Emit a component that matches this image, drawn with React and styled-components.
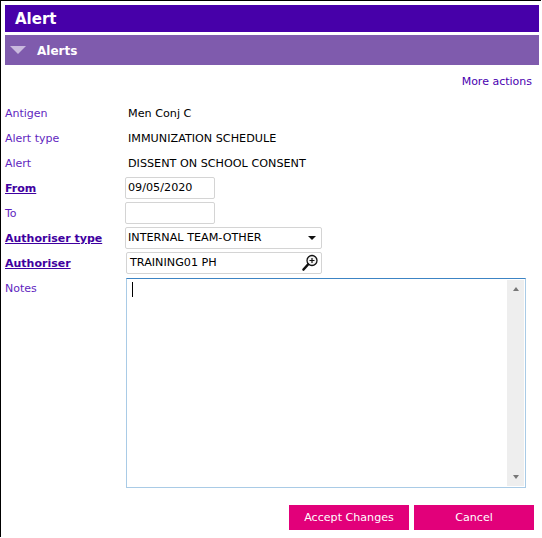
import React from "react";
import styled, { createGlobalStyle } from "styled-components";

const Global = createGlobalStyle`
  html, body { margin: 0; padding: 0; background: #fff; }
  body {
    font-family: "DejaVu Sans", Verdana, sans-serif;
    font-size: 11px;
    color: #000;
  }
`;

const Page = styled.div`
  width: 541px;
  height: 537px;
  overflow: hidden;
  border-top: 1px solid #000;
  border-left: 1px solid #000;
  padding: 4px 2px 0 4px;
  box-sizing: border-box;
  background: #fff;
`;

const TitleBar = styled.div`
  height: 27px;
  background: #4700a9;
  color: #fff;
  font-size: 15px;
  font-weight: 700;
  line-height: 29px;
  padding-left: 10px;
`;

const SectionBar = styled.div`
  margin-top: 3px;
  height: 30px;
  box-sizing: border-box;
  background: #7f5bad;
  color: #fff;
  font-size: 12px;
  font-weight: 700;
  display: flex;
  align-items: center;
  gap: 11px;
  padding: 1px 0 0 5px;
`;

const Arrow = styled.span`
  width: 0;
  height: 0;
  margin-top: -1px;
  border-left: 8px solid transparent;
  border-right: 8px solid transparent;
  border-top: 8px solid #c9b9de;
`;

const Actions = styled.div`
  height: 31px;
  padding-top: 1px;
  box-sizing: border-box;
  display: flex;
  align-items: center;
  justify-content: flex-end;
  padding-right: 7px;
`;

const ActionLink = styled.a`
  color: #4a00b0;
  font-size: 11px;
`;

const Form = styled.div`
  margin-top: 5px;
  display: flex;
  flex-direction: column;
`;

const Row = styled.div`
  min-height: 25px;
  display: grid;
  grid-template-columns: 120px 1fr;
  align-items: ${(p) => (p.$top ? "start" : "center")};
`;

const Label = styled.label`
  color: ${(p) => (p.$required ? "#3f00a0" : "#5f1fc0")};
  font-weight: ${(p) => (p.$required ? 700 : 400)};
  text-decoration: ${(p) => (p.$required ? "underline" : "none")};
  ${(p) => p.$top && "margin-top: 6px;"}
`;

const Value = styled.span`
  padding-left: 3px;
  font-size: 11.2px;
`;

const Field = styled.div`
  width: ${(p) => p.$width}px;
  height: 22px;
  box-sizing: border-box;
  border: 1px solid #d4d4d4;
  border-radius: 2px;
  background: #fff;
  display: flex;
  align-items: center;
  justify-content: space-between;
  padding: 0 3px 0 ${(p) => p.$textInset || 2}px;
  margin: 0 0 2px ${(p) => p.$inset || 0}px;
  font-size: 11.2px;
`;

const Caret = styled.span`
  width: 0;
  height: 0;
  margin-right: 2px;
  border-left: 4px solid transparent;
  border-right: 4px solid transparent;
  border-top: 4px solid #111;
`;

const Notes = styled.div`
  width: 400px;
  height: 210px;
  margin: 2px 0 0 1px;
  box-sizing: border-box;
  border: 1px solid #a9cbe6;
  border-top-color: #3c84c4;
  background: #fff;
  display: flex;
  justify-content: space-between;
  padding: 1px 1px 1px 5px;
`;

const TextCursor = styled.span`
  width: 1px;
  height: 15px;
  margin-top: 2px;
  background: #000;
`;

const Scrollbar = styled.div`
  width: 17px;
  background: #eeeeee;
  display: flex;
  flex-direction: column;
  justify-content: space-between;
  align-items: center;
  padding: 7px 0;
  box-sizing: border-box;
`;

const ScrollArrow = styled.span`
  width: 0;
  height: 0;
  border-left: 3px solid transparent;
  border-right: 3px solid transparent;
  ${(p) => (p.$up ? "border-bottom: 4px solid #777;" : "border-top: 4px solid #777;")}
`;

const Buttons = styled.div`
  margin-top: 17px;
  display: flex;
  justify-content: flex-end;
  gap: 5px;
  padding-right: 5px;
`;

const Button = styled.button`
  width: 120px;
  height: 25px;
  border: 0;
  background: #e2007a;
  color: #fff;
  font-family: inherit;
  font-size: 11.1px;
  padding: 0;
`;

export default function App() {
  return (
    <Page>
      <Global />
      <TitleBar>Alert</TitleBar>
      <SectionBar>
        <Arrow />
        Alerts
      </SectionBar>
      <Actions>
        <ActionLink>More actions</ActionLink>
      </Actions>
      <Form>
        <Row>
          <Label>Antigen</Label>
          <Value>Men Conj C</Value>
        </Row>
        <Row>
          <Label>Alert type</Label>
          <Value>IMMUNIZATION SCHEDULE</Value>
        </Row>
        <Row>
          <Label>Alert</Label>
          <Value>DISSENT ON SCHOOL CONSENT</Value>
        </Row>
        <Row>
          <Label $required>From</Label>
          <Field $width={90}>09/05/2020</Field>
        </Row>
        <Row>
          <Label>To</Label>
          <Field $width={90} />
        </Row>
        <Row>
          <Label $required>Authoriser type</Label>
          <Field $width={197}>
            INTERNAL TEAM-OTHER
            <Caret />
          </Field>
        </Row>
        <Row>
          <Label $required>Authoriser</Label>
          <Field $width={196} $inset={1} $textInset={3}>
            TRAINING01 PH
            <svg width="17" height="18" viewBox="0 0 17 18" fill="none">
              <circle cx="11" cy="6.5" r="5" fill="#f4f4f4" stroke="#111" strokeWidth="1.3" />
              <path d="M8.5 6.5h5M11 4v5" stroke="#111" strokeWidth="1.2" />
              <path d="M7 10.5 2.5 15.5" stroke="#111" strokeWidth="2.6" strokeLinecap="round" />
            </svg>
          </Field>
        </Row>
        <Row $top>
          <Label $top>Notes</Label>
          <Notes>
            <TextCursor />
            <Scrollbar>
              <ScrollArrow $up />
              <ScrollArrow />
            </Scrollbar>
          </Notes>
        </Row>
      </Form>
      <Buttons>
        <Button>Accept Changes</Button>
        <Button>Cancel</Button>
      </Buttons>
    </Page>
  );
}
